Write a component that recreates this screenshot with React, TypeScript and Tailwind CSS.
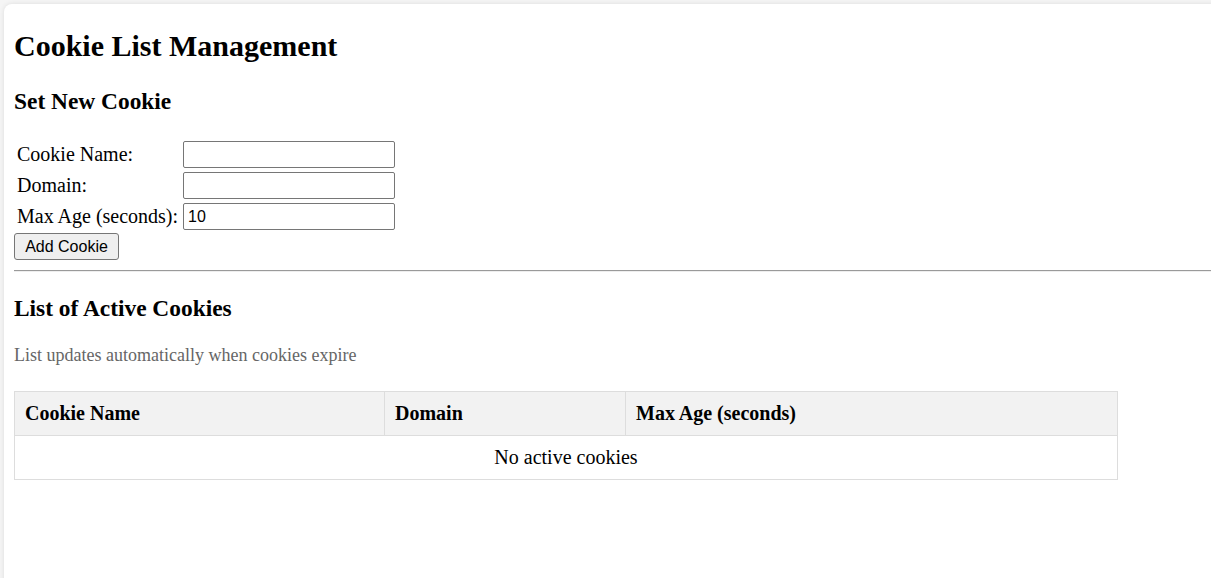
import React from "react";

export default function App() {
  return (
    <div className="w-screen h-screen overflow-hidden bg-[#f5f5f5] pt-[4px] pl-[4px] font-['Liberation_Serif','Times_New_Roman',serif] text-black">
      <div className="w-[1247px] min-h-[620px] bg-white rounded-[8px] shadow-[0_0_5px_rgba(0,0,0,0.1)] px-[10px] pt-[25px]">
        <h2 className="text-[30px] leading-[34px] font-bold">Cookie List Management</h2>
        <h3 className="mt-[25px] text-[23.4px] leading-[27px] font-bold">Set New Cookie</h3>

        <div className="mt-[23px] w-max grid grid-cols-[164px_214px] gap-[2px] p-[2px] text-[20px] leading-[23px]">
          <div className="h-[29px] px-[1px] flex items-center">Cookie Name:</div>
          <div className="h-[29px] p-[1px]">
            <input
              type="text"
              className="w-[212px] h-[27px] border border-[#767676] rounded-[2px] pl-[4px] pr-[2px] text-[16px] font-['Liberation_Sans',Arial,sans-serif] outline-none"
            />
          </div>
          <div className="h-[29px] px-[1px] flex items-center">Domain:</div>
          <div className="h-[29px] p-[1px]">
            <input
              type="text"
              className="w-[212px] h-[27px] border border-[#767676] rounded-[2px] pl-[4px] pr-[2px] text-[16px] font-['Liberation_Sans',Arial,sans-serif] outline-none"
            />
          </div>
          <div className="h-[29px] px-[1px] flex items-center">Max Age (seconds):</div>
          <div className="h-[29px] p-[1px]">
            <input
              type="text"
              defaultValue="10"
              className="w-[212px] h-[27px] border border-[#767676] rounded-[2px] pl-[4px] pr-[2px] text-[16px] font-['Liberation_Sans',Arial,sans-serif] outline-none"
            />
          </div>
        </div>

        <button className="w-[105px] h-[27px] bg-[#efefef] border border-[#767676] rounded-[3px] text-[16px] leading-[18px] font-['Liberation_Sans',Arial,sans-serif] text-black flex items-center justify-center">
          Add Cookie
        </button>

        <div className="mt-[10px] h-[2px] border-t border-t-[#9a9a9a] border-b border-b-[#eeeeee]" />

        <h3 className="mt-[23px] text-[23.4px] leading-[27px] font-bold">List of Active Cookies</h3>
        <p className="mt-[23px] text-[18px] leading-[21px] text-[#666666]">
          List updates automatically when cookies expire
        </p>

        <table className="mt-[25px] w-[1104px] table-fixed border-collapse text-[20px] leading-[23px]">
          <thead>
            <tr className="bg-[#f2f2f2]">
              <th className="w-[370px] border border-[#dddddd] p-[10px] text-left font-bold">Cookie Name</th>
              <th className="w-[241px] border border-[#dddddd] p-[10px] text-left font-bold">Domain</th>
              <th className="border border-[#dddddd] p-[10px] text-left font-bold">Max Age (seconds)</th>
            </tr>
          </thead>
          <tbody>
            <tr>
              <td colSpan={3} className="border border-[#dddddd] p-[10px] text-center">
                No active cookies
              </td>
            </tr>
          </tbody>
        </table>
      </div>
    </div>
  );
}
